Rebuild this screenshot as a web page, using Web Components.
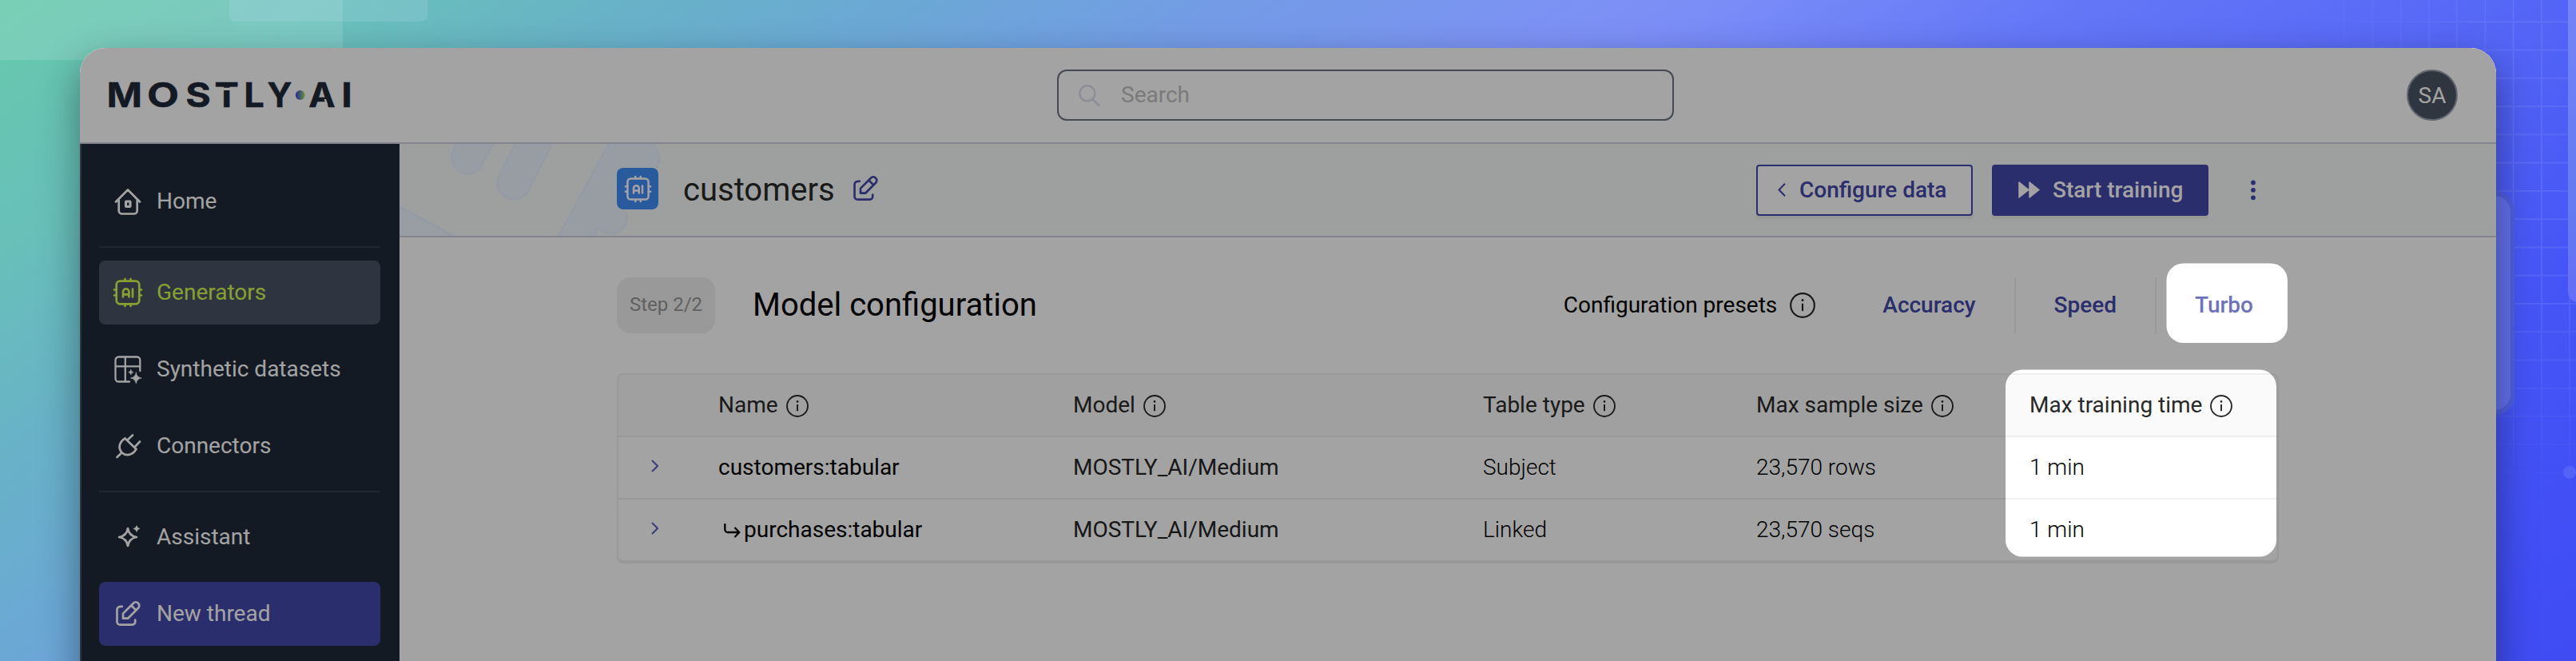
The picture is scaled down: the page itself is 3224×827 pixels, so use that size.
<!DOCTYPE html>
<html lang="en">
<head>
<meta charset="utf-8">
<title>MOSTLY AI - customers</title>
<style>
html,body{margin:0;height:100%;overflow:hidden}
body{font-family:Roboto,"Liberation Sans",sans-serif;font-size:28px}
</style>
</head>
<body>
<app-stage>
  <app-window>
    <top-bar slot="top"></top-bar>
    <side-nav slot="nav">
      <nav-item icon="home">Home</nav-item>
      <hr>
      <nav-item icon="chip" state="selected">Generators</nav-item>
      <nav-item icon="dataset">Synthetic datasets</nav-item>
      <nav-item icon="plug">Connectors</nav-item>
      <hr>
      <nav-item icon="spark">Assistant</nav-item>
      <nav-item icon="edit" state="primary">New thread</nav-item>
    </side-nav>
    <page-banner>customers</page-banner>
    <preset-bar>Model configuration</preset-bar>
    <model-table></model-table>
    <spot-light slot="overlay"></spot-light>
  </app-window>
</app-stage>
<script>
const define = (name, html, setup) => customElements.define(name, class extends HTMLElement {
  constructor() {
    super();
    const root = this.attachShadow({ mode: 'open' });
    const t = document.createElement('template');
    t.innerHTML = html;
    root.append(t.content.cloneNode(true));
  }
  connectedCallback() { if (setup) setup(this, this.shadowRoot); }
});

const ICONS = {
  home: '<path d="M3 18.5 18 3.5 33 18.5M6.7 16V29.5a4 4 0 0 0 4 4H25.700a4 4 0 0 0 4-4V16"/><rect x="15.500" y="18" width="5.500" height="6.500" rx=".5" stroke-width="3.200"/>',
  chip: '<rect x="3.700" y="3.700" width="28.600" height="28.600" rx="4.500"/><path d="M14.500 1v2.500M21.500 1v2.500M14.500 32.500V35M21.500 32.500V35M1 14.500h2.500M1 21.500h2.500M32.500 14.500H35M32.500 21.500H35M12 23.500V17a3.700 3.700 0 0 1 7.400 0v6.500M12 20.300h7.400M24 13.500v10"/>',
  dataset: '<path d="M33.300 20V6.500a4 4 0 0 0-4-4H6.500a4 4 0 0 0-4 4V29.500a4 4 0 0 0 4 4H20M2.500 14.300H33.300M14.800 2.500V33.500" stroke-width="2.300"/><path d="M28.300 22q.8 6 7 7-6.200 1-7 7-.8-6-7-7 6.200-1 7-7ZM21.800 18.500q.4 2.800 3.200 3.200-2.800.4-3.200 3.200-.4-2.800-3.200-3.200 2.800-.4 3.200-3.200Z" fill="currentColor" stroke-width=".6"/>',
  plug: '<path d="M14.500 8.500 28.500 22M17.500 10.500 24 4.500M26.500 19.500 33 12.500M14.500 8.500C7 13 5.500 21 10.500 26.200 15.500 31 23.500 30 28.500 22M10.500 26.200 4.500 32"/>',
  spark: '<path d="M18 7q1.500 9.500 11 11-9.500 1.500-11 11-1.500-9.500-11-11 9.500-1.500 11-11Z"/><path d="M29 4q.5 2.900 3.400 3.400-2.900.5-3.400 3.400-.5-2.900-3.400-3.400 2.900-.5 3.400-3.400Z" fill="currentColor" stroke-width="1.200"/>',
  edit: '<path d="M10.800 8.800H8.500a4 4 0 0 0-4 4V28a3.700 3.700 0 0 0 3.700 3.700H23.500a3.700 3.700 0 0 0 3.700-3.700V25.600M12 23.700V17.600L24.900 4.700a4.300 4.300 0 0 1 6.100 6.100L18.100 23.700ZM22.300 7.500l5.900 5.900"/>',
  info: '<circle cx="18" cy="18" r="16.700" stroke-width="2.400"/><path d="M18 15.500V26" stroke-width="2.500" stroke-linecap="butt"/><circle cx="18" cy="10.800" r="1.700" fill="currentColor" stroke="none"/>'
};
define('ui-icon', `<style>:host{display:block;flex:none;width:36px;height:36px}svg{display:block;width:100%;height:100%;overflow:visible}</style>
<svg viewBox="0 0 36 36" fill="none" stroke="currentColor" stroke-width="2.700" stroke-linecap="round" stroke-linejoin="round"></svg>`,
(el, r) => { r.querySelector('svg').innerHTML = ICONS[el.getAttribute('name')]; });

define('nav-item', `<style>
:host{display:flex;align-items:center;gap:18px;height:80px;padding:0 18px;box-sizing:border-box;border-radius:8px;color:#fff;margin-bottom:16px}
:host([state=selected]){background:#4a5464;color:#d3fb4c}
:host([state=primary]){background:#4348a9}
span{padding-bottom:2px}
</style><ui-icon></ui-icon><span><slot></slot></span>`,
(el, r) => {
  const i = document.createElement('ui-icon');
  i.setAttribute('name', el.getAttribute('icon'));
  r.querySelector('ui-icon').replaceWith(i);
});

define('side-nav', `<style>
:host{display:block;width:400px;box-sizing:border-box;padding:32px 24px 0;border-left:2px solid #4b5563;padding-left:22px;background:#1f2937}
::slotted(hr){border:0;height:2px;margin:0 0 16px;background:#353e4e}
</style><slot></slot>`);

define('brand-logo', `<style>:host{display:block;width:316px;height:60px}svg{display:block}text{font:700 43px Inter,"Liberation Sans",sans-serif;fill:#1f2937;stroke:#1f2937;stroke-width:.5px}</style>
<svg width="316" height="60" viewBox="-6 -10 316 60">
<defs><linearGradient id="g"><stop offset=".1" stop-color="#5547d8"/><stop offset=".5" stop-color="#5b93b0"/><stop offset=".9" stop-color="#a3d84a"/></linearGradient></defs>
<text y="35.300"><tspan x="-2.500" textLength="44.500" lengthAdjust="spacingAndGlyphs">M</tspan><tspan x="48" textLength="40" lengthAdjust="spacingAndGlyphs">O</tspan><tspan x="96.200" textLength="31.600" lengthAdjust="spacingAndGlyphs">S</tspan><tspan x="132.600" textLength="30.300" lengthAdjust="spacingAndGlyphs">T</tspan><tspan x="169.200" textLength="25.600" lengthAdjust="spacingAndGlyphs">L</tspan><tspan x="198.500" textLength="31" lengthAdjust="spacingAndGlyphs">Y</tspan><tspan x="250.300" textLength="33.400" lengthAdjust="spacingAndGlyphs">A</tspan><tspan x="291.200" textLength="13.600" lengthAdjust="spacingAndGlyphs">I</tspan></text>
<path d="M132 10.700h33v3.300h-33zM269.500 25h2.500l2.500 7h-2.500z" fill="#fff"/>
<circle cx="239.700" cy="20" r="5.900" fill="url(#g)"/></svg>`);

define('top-bar', `<style>
:host{display:flex;align-items:center;height:118px;padding:0 48px 0 30px;background:#fff;border-bottom:2px solid #cdcfde}
.search{display:flex;align-items:center;gap:26px;box-sizing:border-box;width:772px;height:64px;margin-left:877px;padding-left:25px;border:2px solid #6b7280;border-radius:12px;color:#c0c0c0}
.search svg{display:block}
.search span{padding-bottom:1px}
.avatar{margin-left:auto;display:grid;place-items:center;box-sizing:border-box;width:64px;height:64px;border-radius:50%;border:2px solid #9ca3af;background:#4b5563;color:#fff;padding-top:1px}
</style>
<brand-logo></brand-logo>
<div class="search"><svg width="27" height="27" viewBox="0 0 27 27" fill="none" stroke="#dcdeea" stroke-width="2.500" stroke-linecap="round"><circle cx="10.800" cy="10.800" r="9.500"/><path d="m17.500 18 8 8"/></svg><span>Search</span></div>
<div class="avatar">SA</div>`);

define('page-banner', `<style>
:host{display:grid;height:115px;background:#f7fbf9;border-bottom:2px solid #cdcfde;overflow:hidden}
.art,.row{grid-area:1/1}
.art{width:400px;height:115px}
.row{display:flex;align-items:center;padding:0 272px}
.badge{display:grid;place-items:center;width:52px;height:52px;margin:-3px 31px 0 0;border-radius:8px;background:#438ef8;color:#fff}
.badge ui-icon{width:33px;height:33px}
h1{margin:0;font-weight:400;font-size:40px;color:#292929}
.edit{margin:-4px auto 0 20px;color:#4348a9}
.btn{display:flex;align-items:center;box-sizing:border-box;width:271px;height:64px;margin-right:24px;border-radius:4px;font-weight:500;background:#fff;color:#4348a9;border:2px solid #4348a9;box-shadow:0 4px 0 rgba(0,0,0,.05)}
.btn span{padding-bottom:1px}
.solid{background:#4348a9;color:#fff}
.btn svg{flex:none}
.menu{width:64px}
.menu svg{display:block;margin:auto}
</style>
<svg class="art" viewBox="500 180 400 115" fill="#edf6ff" stroke="#e6f1ff" stroke-width="2">
<path d="M571 180Q565 191 565.500 199A20 20 0 0 0 603 207L618 178H571Z"/>
<path d="M646 178L625 219A20 20 0 0 0 661 239L692 178Z"/>
<path d="M763 178 698 297H744L748 285C754 292 763 294 772 291 784 286 789 270 780 262L800 222C822 224 835 196 815 178Z"/>
<path d="M498 257 571 297H498Z"/></svg>
<div class="row">
<div class="badge"><ui-icon name="chip"></ui-icon></div><h1><slot></slot></h1><ui-icon class="edit" name="edit"></ui-icon>
<div class="btn" style="padding-left:25px;gap:17px"><svg width="10" height="17" viewBox="0 0 10 17" fill="none" stroke="currentColor" stroke-width="2"><path d="M9 .8 1.500 8.500 9 16.200"/></svg><span>Configure data</span></div>
<div class="btn solid" style="padding-left:31px;gap:16px"><svg width="27" height="21" viewBox="0 0 27 21" fill="currentColor" stroke="currentColor" stroke-width="1.500" stroke-linejoin="round"><path d="M1 1 13 10.500 1 20ZM14 1 26 10.500 14 20Z"/></svg><span>Start training</span></div>
<div class="menu"><svg width="8" height="26" viewBox="0 0 8 26" fill="#4348a9"><circle cx="4" cy="3.500" r="2.900"/><circle cx="4" cy="12.800" r="2.900"/><circle cx="4" cy="22.300" r="2.900"/></svg></div>
</div>`);

define('preset-bar', `<style>
:host{display:flex;align-items:center;height:70px;margin:50px 272px}
.step{display:grid;place-items:center;width:123px;height:70px;border-radius:17px;background:#f0f0f0;color:#969696;font-size:24px;padding-bottom:2px;box-sizing:border-box}
h2{margin:0 auto 0 47px;font-weight:400;font-size:40px;color:#000;padding-bottom:1px}
.info{width:32px;height:32px;margin:0 36px 0 16px;color:#292929}
span{padding-bottom:2px}
a{display:flex;align-items:center;height:70px;box-sizing:border-box;padding:0 48px 2px;font-weight:500;color:#4348a9}
a+a{border-left:2px solid #efefef}
a:last-child{padding-right:32px;color:#6d72bc}
</style>
<div class="step">Step 2/2</div><h2><slot></slot></h2><span>Configuration presets</span><ui-icon class="info" name="info"></ui-icon>
<a>Accuracy</a><a>Speed</a><a>Turbo</a>`);

define('model-table', `<style>
:host{display:block;margin:0 272px;border:2px solid #efefef;border-bottom-width:4px;border-radius:8px;overflow:hidden;color:#000}
.r{display:grid;grid-template-columns:125px 444px 513px 342px 342px 1fr;align-items:center;height:76px}
.r+.r{border-top:2px solid #efefef}
.r>span{padding-bottom:2px}
.h{background:#fafafa;color:#292929}
.h span{display:flex;align-items:center;gap:10px}
.h ui-icon{width:28px;height:28px;margin-top:4px}
.m{color:#262626}.l{font-weight:350}
.c{display:block;margin:-4px 0 0 41px}
.n{display:flex;align-items:center;gap:4px}
.n svg{margin:3px 0 0 7px}
</style>
<div class="r h"><i></i><span>Name<ui-icon name="info"></ui-icon></span><span>Model<ui-icon name="info"></ui-icon></span><span>Table type<ui-icon name="info"></ui-icon></span><span>Max sample size<ui-icon name="info"></ui-icon></span><span>Max training time<ui-icon name="info"></ui-icon></span></div>
<div class="r"><svg class="c" width="9" height="16" viewBox="0 0 9 16" fill="none" stroke="#5a60c4" stroke-width="2"><path d="M1 1 8 8 1 15"/></svg><span>customers:tabular</span><span class="m">MOSTLY_AI/Medium</span><span class="l">Subject</span><span class="l">23,570 rows</span><span class="l">1 min</span></div>
<div class="r"><svg class="c" width="9" height="16" viewBox="0 0 9 16" fill="none" stroke="#5a60c4" stroke-width="2"><path d="M1 1 8 8 1 15"/></svg><span class="n"><svg width="21" height="18" viewBox="0 0 21 18" fill="none" stroke="#000" stroke-width="2.300"><path d="M1.300 0V7.500a3.500 3.500 0 0 0 3.500 3.500H19M13.500 5 19.200 11 13.500 17"/></svg>purchases:tabular</span><span class="m">MOSTLY_AI/Medium</span><span class="l">Linked</span><span class="l">23,570 seqs</span><span class="l">1 min</span></div>`);

/* Dims the whole window except the two highlighted regions. */
define('spot-light', `<style>:host{display:block}svg{display:block}</style>
<svg width="3024" height="800" viewBox="100 60 3024 800"><defs><mask id="m"><path d="M100 60h3024v800H100z" fill="#fff"/><rect x="2711.500" y="329.500" width="151.500" height="99.500" rx="21"/><rect x="2510" y="462.500" width="339" height="234" rx="21"/></mask></defs>
<path d="M100 60h3024v800H100z" fill="#000" fill-opacity=".36" mask="url(#m)"/></svg>`);

define('app-window', `<style>
:host{display:block;width:3024px;height:800px;border-radius:32px 32px 0 0;box-shadow:0 20px 50px rgba(0,0,0,.4)}
.clip{display:flex;flex-direction:column;position:relative;height:100%;border-radius:inherit;overflow:hidden;background:#a3a3a3}
.body{display:grid;grid-template-columns:400px 1fr;flex:1;background:#fff}
::slotted([slot=overlay]){position:absolute;inset:0;z-index:5;border-radius:32px 32px 0 0;overflow:hidden}
</style>
<div class="clip"><slot name="top"></slot><div class="body"><slot name="nav"></slot><main><slot></slot></main></div><slot name="overlay"></slot></div>`);

define('app-stage', `<style>
:host{display:grid;width:3224px;height:827px;overflow:hidden}
.bg{grid-area:1/1;display:block}
.fg{grid-area:1/1;padding:60px 100px 0;position:relative;height:767px}
</style>
<svg class="bg" width="3224" height="827" viewBox="0 0 3224 827">
<defs>
<linearGradient id="b" gradientUnits="userSpaceOnUse" x1="0" y1="0" x2="1500.700" y2="2086">
<stop offset="0" stop-color="#66c9ab"/><stop offset=".105" stop-color="#68bfba"/><stop offset=".18" stop-color="#68b2c7"/><stop offset=".26" stop-color="#6ba8d5"/><stop offset=".34" stop-color="#729de4"/><stop offset=".455" stop-color="#7c91f4"/><stop offset=".49" stop-color="#7a8df7"/><stop offset=".59" stop-color="#6477f7"/><stop offset=".7" stop-color="#5769f6"/><stop offset=".83" stop-color="#4656f5"/><stop offset=".95" stop-color="#404ef5"/><stop offset="1" stop-color="#404cf2"/></linearGradient>
<linearGradient id="f" x1="0" x2="1"><stop offset="0" stop-color="#fff" stop-opacity="0"/><stop offset=".8" stop-color="#fff"/></linearGradient>
<linearGradient id="v" x1="0" y1="0" x2="0" y2="1"><stop offset=".55" stop-color="#fff"/><stop offset="1" stop-color="#fff" stop-opacity="0"/></linearGradient>
<linearGradient id="p" x1="0" y1="0" x2="0" y2="1"><stop offset="0" stop-color="#7484f8"/><stop offset=".7" stop-color="#637af0"/><stop offset="1" stop-color="#666ef6"/></linearGradient>
<mask id="h" maskUnits="userSpaceOnUse" x="2860" y="0" width="364" height="640"><rect x="2860" width="364" height="640" fill="url(#f)"/></mask>
<mask id="k" maskUnits="userSpaceOnUse" x="2860" y="0" width="364" height="640"><rect x="2860" width="364" height="640" fill="url(#v)"/></mask>
<pattern id="q" patternUnits="userSpaceOnUse" x="2968.300" y="26.300" width="35.270" height="35.270"><path d="M0 1H35.270M1 0V35.270" stroke="#8f9cff" stroke-opacity=".22" stroke-width="2"/></pattern>
</defs>
<rect width="3224" height="827" fill="url(#b)"/>
<path d="M0 0H429V75H0z" fill="#fff" fill-opacity=".13"/>
<path d="M287 0H535V20a7 7 0 0 1-7 7H295a8 8 0 0 1-8-7z" fill="#cfe0ff" fill-opacity=".16"/>
<g mask="url(#k)"><rect x="2860" width="364" height="640" fill="url(#q)" mask="url(#h)"/></g>
<rect x="3060" y="239" width="87" height="280" rx="24" fill="#505fe0"/><rect x="3060" y="245" width="82" height="268" rx="20" fill="#6371ec"/>
<path d="M3214 0H3224V378Q3214 376 3214 364Z" fill="url(#p)"/>
<circle cx="3216" cy="591" r="8" fill="#5767f7" fill-opacity=".8"/>
</svg>
<div class="fg"><slot></slot></div>`);
</script>
</body>
</html>
